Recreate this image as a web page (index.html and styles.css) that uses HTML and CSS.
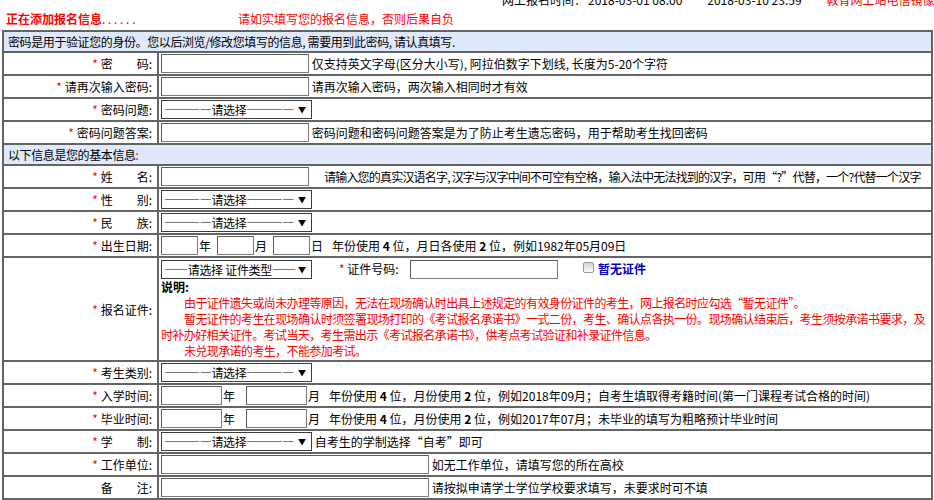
FILE: index.html
```html
<!DOCTYPE html>
<html lang="zh-CN">
<head>
    <meta charset="UTF-8">
    <title>报名信息</title>
    <link rel="stylesheet" href="styles.css">
</head>
<body>
    <div class="topline">
        <span>网上报名时间：</span><span class="t1">2018-03-01 08:00</span><span class="t2">2018-03-10 23:59</span><span class="mirror">教育网上站电信镜像</span>
    </div>
    <div class="head">
        <span class="adding"><b>正在添加报名信息</b>. . . . . .</span>
        <span class="warn">请如实填写您的报名信息，否则后果自负</span>
    </div>

    <table class="form">
        <colgroup>
            <col class="c-label">
            <col>
        </colgroup>
        <tr>
            <td colspan="2" class="sect">密码是用于验证您的身份。您以后浏览/修改您填写的信息, 需要用到此密码, 请认真填写.</td>
        </tr>
        <tr>
            <td class="lbl"><i>*</i> 密　　码:</td>
            <td><input type="text" class="w148"> 仅支持英文字母(区分大小写), 阿拉伯数字下划线, 长度为5-20个字符</td>
        </tr>
        <tr>
            <td class="lbl"><i>*</i> 请再次输入密码:</td>
            <td><input type="text" class="w148"> 请再次输入密码，两次输入相同时才有效</td>
        </tr>
        <tr>
            <td class="lbl"><i>*</i> 密码问题:</td>
            <td><span class="sel"><select><option>————请选择————</option></select><span class="arrow">▼</span></span></td>
        </tr>
        <tr>
            <td class="lbl"><i>*</i> 密码问题答案:</td>
            <td><input type="text" class="w148"> 密码问题和密码问题答案是为了防止考生遗忘密码，用于帮助考生找回密码</td>
        </tr>
        <tr>
            <td colspan="2" class="sect">以下信息是您的基本信息<i>:</i></td>
        </tr>
        <tr>
            <td class="lbl"><i>*</i> 姓　　名:</td>
            <td><input type="text" class="w148"><span class="hint wide tight">请输入您的真实汉语名字, 汉字与汉字中间不可空有空格，输入法中无法找到的汉字，可用“?”代替，一个?代替一个汉字</span></td>
        </tr>
        <tr>
            <td class="lbl"><i>*</i> 性　　别:</td>
            <td><span class="sel"><select><option>————请选择————</option></select><span class="arrow">▼</span></span></td>
        </tr>
        <tr>
            <td class="lbl"><i>*</i> 民　　族:</td>
            <td><span class="sel"><select><option>————请选择————</option></select><span class="arrow">▼</span></span></td>
        </tr>
        <tr>
            <td class="lbl"><i>*</i> 出生日期:</td>
            <td>
                <div class="dates">
                    <input type="text" class="w37"><span class="unit">年</span>
                    <input type="text" class="w37"><span class="unit">月</span>
                    <input type="text" class="w37"><span class="unit">日</span>
                    <span class="hint wide">年份使用<b> 4 </b>位，月日各使用<b> 2 </b>位，例如1982年05月09日</span>
                </div>
            </td>
        </tr>
        <tr>
            <td class="lbl"><i>*</i> 报名证件:</td>
            <td class="cert">
                <div class="cert-line">
                    <span class="sel"><select><option>——请选择 证件类型——</option></select><span class="arrow">▼</span></span>
                    <span class="cert-no"><i>*</i> 证件号码:</span>
                    <input type="text" class="w148">
                    <label class="nocert"><input type="checkbox"> 暂无证件</label>
                </div>
                <div class="note-title">说明:</div>
                <div class="notes">
                    <p>由于证件遗失或尚未办理等原因，无法在现场确认时出具上述规定的有效身份证件的考生，网上报名时应勾选“暂无证件”。</p>
                    <p>暂无证件的考生在现场确认时须签署现场打印的《考试报名承诺书》一式二份，考生、确认点各执一份。现场确认结束后，考生须按承诺书要求，及时补办好相关证件。考试当天，考生需出示《考试报名承诺书》，供考点考试验证和补录证件信息。</p>
                    <p>未兑现承诺的考生，不能参加考试。</p>
                </div>
            </td>
        </tr>
        <tr>
            <td class="lbl"><i>*</i> 考生类别:</td>
            <td><span class="sel"><select><option>————请选择————</option></select><span class="arrow">▼</span></span></td>
        </tr>
        <tr>
            <td class="lbl"><i>*</i> 入学时间:</td>
            <td>
                <div class="dates">
                    <input type="text" class="w61"><span class="unit u2">年</span>
                    <input type="text" class="w61"><span class="unit">月</span>
                    <span class="hint wide">年份使用<b> 4 </b>位，月份使用<b> 2 </b>位，例如2018年09月；自考生填取得考籍时间(第一门课程考试合格的时间)</span>
                </div>
            </td>
        </tr>
        <tr>
            <td class="lbl"><i>*</i> 毕业时间:</td>
            <td>
                <div class="dates">
                    <input type="text" class="w61"><span class="unit u2">年</span>
                    <input type="text" class="w61"><span class="unit">月</span>
                    <span class="hint wide">年份使用<b> 4 </b>位，月份使用<b> 2 </b>位，例如2017年07月；未毕业的填写为粗略预计毕业时间</span>
                </div>
            </td>
        </tr>
        <tr>
            <td class="lbl"><i>*</i> 学　　制:</td>
            <td><span class="sel"><select><option>————请选择————</option></select><span class="arrow">▼</span></span> 自考生的学制选择“自考”即可</td>
        </tr>
        <tr>
            <td class="lbl"><i>*</i> 工作单位:</td>
            <td><input type="text" class="w268"> 如无工作单位，请填写您的所在高校</td>
        </tr>
        <tr>
            <td class="lbl">备　　注:</td>
            <td><input type="text" class="w268"> 请按拟申请学士学位学校要求填写，未要求时可不填</td>
        </tr>
    </table>
</body>
</html>
```

FILE: styles.css
```css
body {
    margin: 0;
    padding: 0;
    font-family: "Noto Sans CJK SC", "DejaVu Sans", sans-serif;
    font-size: 12px;
    color: #000;
    background-color: #fff;
}

i {
    font-style: normal;
    color: #f00;
}

.topline {
    height: 12px;
    margin-top: -6px;
    padding-left: 502px;
    line-height: 12px;
    white-space: nowrap;
}

.topline .t1 {
    margin-left: 2px;
}

.topline .t2 {
    margin-left: 25px;
}

.topline .mirror {
    margin-left: 25px;
    color: #f00;
}

.head {
    display: flex;
    box-sizing: border-box;
    height: 24px;
    padding-top: 4px;
    line-height: 18px;
    color: #f00;
}

.adding {
    width: 232px;
    padding-left: 6px;
}

.form {
    margin-left: 2px;
    width: 931px;
    table-layout: fixed;
    border-collapse: collapse;
    border: 2px solid #5c5c5c;
}

.c-label {
    width: 155px;
}

.form td {
    border: 2px solid #646464;
    padding: 1px 2px;
    height: 19px;
    line-height: 19px;
    vertical-align: middle;
    white-space: nowrap;
    overflow: hidden;
}

.form td.sect {
    background-color: #dfe9fb;
    padding: 0 2px 0 4px;
    height: 19px;
    line-height: 19px;
    letter-spacing: -0.4px;
}

.form td.lbl {
    text-align: right;
    padding-right: 5px;
}

input[type="text"] {
    box-sizing: border-box;
    height: 19px;
    margin: 0;
    padding: 0 2px;
    border: 1px solid #7b7b7b;
    border-top-color: #5a5a5a;
    border-left-color: #5a5a5a;
    vertical-align: top;
    font-size: 12px;
}

.w148 { width: 148px; }
.w37 { width: 37px; }
.w61 { width: 61px; }
.w268 { width: 268px; }

.sel {
    position: relative;
    display: inline-block;
    vertical-align: top;
    height: 19px;
}

.sel select {
    appearance: none;
    -webkit-appearance: none;
    box-sizing: border-box;
    width: 151px;
    height: 19px;
    margin: 0;
    padding: 0 0 0 2px;
    border: 1px solid #3c3c3c;
    background-color: #fff;
    font-family: "Noto Sans CJK SC", sans-serif;
    font-size: 12px;
    letter-spacing: -0.3px;
    color: #000;
    vertical-align: top;
}

.sel .arrow {
    position: absolute;
    right: 6px;
    top: 0;
    line-height: 19px;
    font-size: 8px;
    pointer-events: none;
}

.hint.wide {
    margin-left: 15px;
}

.hint.tight {
    letter-spacing: -0.8px;
}

.dates {
    display: flex;
    align-items: center;
    height: 19px;
}

.dates .unit {
    width: 18px;
    padding-left: 1px;
}

.dates .unit.u2 {
    width: 23px;
}

.dates .hint.wide {
    margin-left: 3px;
}

.form td.cert {
    padding: 1px 2px 1px;
    height: auto;
    line-height: 16px;
}

.cert-line {
    display: flex;
    align-items: center;
    height: 20px;
}

.cert-no {
    margin-left: 27px;
    width: 71px;
}

.nocert {
    display: flex;
    align-items: center;
    margin-left: 25px;
    color: #0000cc;
    font-weight: bold;
}

.nocert input {
    appearance: none;
    -webkit-appearance: none;
    width: 11px;
    height: 11px;
    margin: 0 4px 4px 0;
    border: 1px solid #999;
    border-radius: 2px;
    background: linear-gradient(#d6d6d6, #fafafa);
}

.note-title {
    font-weight: bold;
}

.notes {
    color: #f00;
    white-space: normal;
    letter-spacing: -0.6px;
}

.notes p {
    margin: 0;
    text-indent: 23px;
}
```
